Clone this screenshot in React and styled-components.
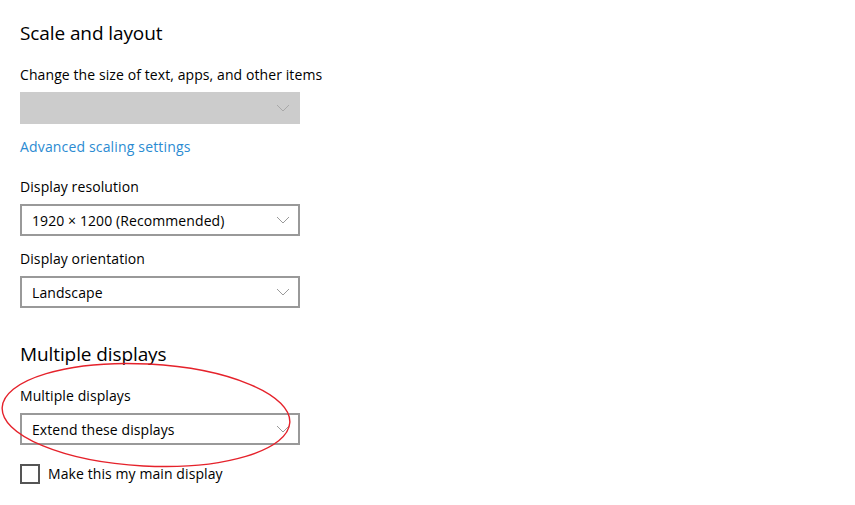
import React, { useState } from "react";
import styled, { createGlobalStyle } from "styled-components";

const GlobalStyle = createGlobalStyle`
  html, body {
    margin: 0;
    padding: 0;
    background: #ffffff;
  }
  body {
    font-family: "Open Sans", "Noto Sans", "Liberation Sans", sans-serif;
    color: #000000;
  }
`;

const Page = styled.div`
  position: relative;
  width: 855px;
  height: 505px;
  overflow: hidden;
  box-sizing: border-box;
  padding: 19px 0 0 20px;
  display: flex;
  flex-direction: column;
  align-items: flex-start;
`;

const Heading = styled.h2`
  margin: ${(p) => p.$top || 0}px 0 0 0;
  font-size: 19px;
  font-weight: 400;
  line-height: 28px;
  height: 28px;
  letter-spacing: -0.1px;
`;

const Label = styled.div`
  margin-top: ${(p) => p.$top || 0}px;
  font-size: 14px;
  line-height: 20px;
  height: 20px;
  letter-spacing: 0.09px;
`;

const Link = styled.a`
  margin-top: ${(p) => p.$top || 0}px;
  font-size: 14px;
  line-height: 20px;
  height: 20px;
  color: #2b8bd2;
  text-decoration: none;
  letter-spacing: 0.16px;
  cursor: pointer;
`;

const Select = styled.div`
  margin-top: ${(p) => p.$top || 7}px;
  box-sizing: border-box;
  width: 280px;
  height: 32px;
  display: flex;
  align-items: center;
  justify-content: space-between;
  padding: 0 8px 0 10px;
  background: ${(p) => (p.$disabled ? "#cccccc" : "#ffffff")};
  border: 2px solid ${(p) => (p.$disabled ? "#cccccc" : "#999999")};
  font-size: 14px;
  letter-spacing: 0.09px;
`;

const Chevron = styled.svg`
  width: 14px;
  height: 8px;
  flex: none;
`;

const CheckRow = styled.label`
  margin-top: 19px;
  display: flex;
  align-items: center;
  gap: 8px;
  font-size: 14px;
  line-height: 20px;
  letter-spacing: 0.09px;
  cursor: pointer;
`;

const Box = styled.span`
  box-sizing: border-box;
  width: 20px;
  height: 20px;
  border: 2px solid #555555;
  display: flex;
  align-items: center;
  justify-content: center;
  background: #ffffff;
`;

const Annotation = styled.svg`
  position: absolute;
  left: 0;
  top: 0;
  width: 855px;
  height: 505px;
  pointer-events: none;
`;

const Dropdown = ({ value, disabled, top }) => (
  <Select $disabled={disabled} $top={top}>
    <span>{value}</span>
    <Chevron viewBox="0 0 14 8">
      <path
        d="M1 1 L7 7 L13 1"
        fill="none"
        stroke={disabled ? "#a8a8a8" : "#9a9a9a"}
        strokeWidth="1"
      />
    </Chevron>
  </Select>
);

const App = () => {
  const [checked, setChecked] = useState(false);

  return (
    <>
      <GlobalStyle />
      <Page>
        <Heading>Scale and layout</Heading>
        <Label $top={18}>Change the size of text, apps, and other items</Label>
        <Dropdown disabled value="" />
        <Link $top={13}>Advanced scaling settings</Link>

        <Label $top={20}>Display resolution</Label>
        <Dropdown value="1920 × 1200 (Recommended)" />
        <Label $top={13}>Display orientation</Label>
        <Dropdown value="Landscape" />

        <Heading $top={32}>Multiple displays</Heading>
        <Label $top={18}>Multiple displays</Label>
        <Dropdown value="Extend these displays" />

        <CheckRow onClick={() => setChecked(!checked)}>
          <Box>
            {checked ? (
              <svg width="14" height="14" viewBox="0 0 14 14">
                <path d="M2 7 L5.5 10.5 L12 3" fill="none" stroke="#000" strokeWidth="1.5" />
              </svg>
            ) : null}
          </Box>
          Make this my main display
        </CheckRow>

        <Annotation viewBox="0 0 855 505">
          <ellipse
            cx="146"
            cy="415"
            rx="144"
            ry="51"
            transform="rotate(3 146 415)"
            fill="none"
            stroke="#e5222b"
            strokeWidth="1.4"
          />
        </Annotation>
      </Page>
    </>
  );
};

export default App;
